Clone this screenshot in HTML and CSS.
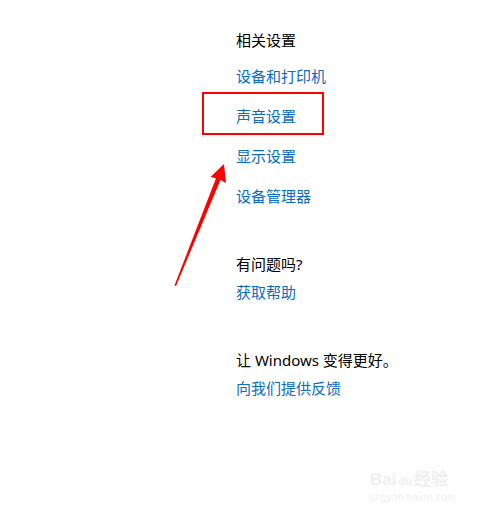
FILE: index.html
```html
<!DOCTYPE html>
<html lang="zh-CN">
  <head>
    <meta charset="UTF-8" />
    <meta name="viewport" content="width=device-width, initial-scale=1.0" />
    <title>相关设置</title>
    <link rel="stylesheet" href="styles.css">
  </head>
  <body>
    <div class="panel">
      <div class="group">
        <h2 class="title">相关设置</h2>
        <ul class="links links-first">
          <li><a href="#">设备和打印机</a></li>
          <li><a href="#">声音设置</a></li>
          <li><a href="#">显示设置</a></li>
          <li><a href="#">设备管理器</a></li>
        </ul>
      </div>

      <div class="group">
        <h2 class="title">有问题吗?</h2>
        <ul class="links">
          <li><a href="#">获取帮助</a></li>
        </ul>
      </div>

      <div class="group">
        <h2 class="title">让 Windows 变得更好。</h2>
        <ul class="links">
          <li><a href="#">向我们提供反馈</a></li>
        </ul>
      </div>
    </div>

    <!-- 标注：红框和箭头 -->
    <div class="mark-box"></div>
    <svg class="mark-arrow" width="487" height="517" viewBox="0 0 487 517">
      <polygon points="224,164 226,183 220.5,180 176,286 174.5,285.5 216,178.2 210.5,177" fill="#ff0000" />
    </svg>

    <div class="watermark">
      <span class="wm-logo">Bai<span class="wm-du">du</span>经验</span>
      <span class="wm-url">jingyan.baidu.com</span>
    </div>
  </body>
</html>
```

FILE: styles.css
```css
body {
  margin: 0;
  padding: 0;
  background: #fff;
  font-family: "Noto Sans", "Noto Sans CJK SC", sans-serif;
  font-size: 15px;
  color: #000;
  width: 487px;
  height: 517px;
  overflow: hidden;
  position: relative;
}
.panel {
  padding: 30px 0 0 236px;
}
.group + .group {
  margin-top: 48px;
}
.title {
  margin: 0;
  font-size: 15px;
  font-weight: normal;
  line-height: 20px;
  font-family: "Noto Sans", "Noto Sans CJK SC", sans-serif;
}
.links {
  list-style: none;
  margin: 8px 0 0;
  padding: 0;
  display: flex;
  flex-direction: column;
  gap: 20px;
}
.links-first {
  margin-top: 16px;
}
.links li {
  line-height: 20px;
}
.links a {
  color: #0a6cc6;
  text-decoration: none;
}
.mark-box {
  position: absolute;
  left: 202px;
  top: 92px;
  width: 118px;
  height: 39px;
  border: 2px solid #ff0000;
}
.mark-arrow {
  position: absolute;
  left: 0;
  top: 0;
  pointer-events: none;
}
.watermark {
  position: absolute;
  left: 370px;
  top: 470px;
  display: flex;
  flex-direction: column;
  color: #efefef;
  font-family: "Liberation Sans", "Noto Sans CJK SC", sans-serif;
}
.wm-logo {
  font-size: 17px;
  font-weight: bold;
  line-height: 20px;
}
.wm-du {
  font-size: 11px;
  margin: 0 2px;
}
.wm-url {
  font-size: 10px;
  line-height: 14px;
  letter-spacing: 0.3px;
}
```
